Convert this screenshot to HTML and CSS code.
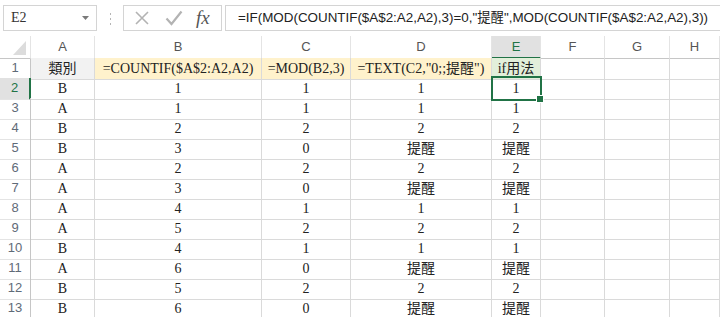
FILE: index.html
```html
<!DOCTYPE html>
<html lang="zh-TW">

<head>
    <meta charset="UTF-8">
    <title>if用法</title>
    <link rel="stylesheet" href="styles.css">
</head>

<body>
    <!-- 名稱方塊 + 公式列 -->
    <div class="formula-bar">
        <div class="name-box">
            <span>E2</span>
            <svg class="caret" width="7" height="4" viewBox="0 0 7 4"><path d="M0 0H7L3.5 4Z" fill="#7a7a7a"/></svg>
        </div>
        <div class="grip">
            <svg width="3" height="13" viewBox="0 0 3 13"><rect x="1" y="1" width="1" height="2" fill="#b5b5b5"/><rect x="1" y="6" width="1" height="2" fill="#b5b5b5"/><rect x="1" y="11" width="1" height="2" fill="#b5b5b5"/></svg>
        </div>
        <div class="fx-box">
            <svg class="ico" width="16" height="16" viewBox="0 0 16 16"><path d="M2 2L14 14M14 2L2 14" stroke="#b3b3b3" stroke-width="1.6" fill="none"/></svg>
            <svg class="ico" width="18" height="16" viewBox="0 0 18 16"><path d="M1.5 8.5L6.5 14L16.5 1.5" stroke="#b3b3b3" stroke-width="2.2" fill="none"/></svg>
            <span class="fx">fx</span>
        </div>
        <div class="formula-input">=IF(MOD(COUNTIF($A$2:A2,A2),3)=0,"提醒",MOD(COUNTIF($A$2:A2,A2),3))</div>
    </div>

    <div class="sheet">
        <div class="row head">
            <div class="corner"><span class="tri"></span></div>
            <div>A</div><div>B</div><div>C</div><div>D</div><div class="on">E</div><div>F</div><div>G</div><div>H</div>
        </div>
        <div class="row">
            <div class="num">1</div>
            <div class="c grey">類別</div>
            <div class="c peach">=COUNTIF($A$2:A2,A2)</div>
            <div class="c peach">=MOD(B2,3)</div>
            <div class="c peach">=TEXT(C2,"0;;提醒")</div>
            <div class="c green">if用法</div>
            <div class="c"></div><div class="c"></div><div class="c"></div>
        </div>
        <div class="row">
            <div class="num on">2</div>
            <div class="c">B</div><div class="c">1</div><div class="c">1</div><div class="c">1</div><div class="c active">1</div>
            <div class="c"></div><div class="c"></div><div class="c"></div>
        </div>
        <div class="row">
            <div class="num">3</div>
            <div class="c">A</div><div class="c">1</div><div class="c">1</div><div class="c">1</div><div class="c">1</div>
            <div class="c"></div><div class="c"></div><div class="c"></div>
        </div>
        <div class="row">
            <div class="num">4</div>
            <div class="c">B</div><div class="c">2</div><div class="c">2</div><div class="c">2</div><div class="c">2</div>
            <div class="c"></div><div class="c"></div><div class="c"></div>
        </div>
        <div class="row">
            <div class="num">5</div>
            <div class="c">B</div><div class="c">3</div><div class="c">0</div><div class="c">提醒</div><div class="c">提醒</div>
            <div class="c"></div><div class="c"></div><div class="c"></div>
        </div>
        <div class="row">
            <div class="num">6</div>
            <div class="c">A</div><div class="c">2</div><div class="c">2</div><div class="c">2</div><div class="c">2</div>
            <div class="c"></div><div class="c"></div><div class="c"></div>
        </div>
        <div class="row">
            <div class="num">7</div>
            <div class="c">A</div><div class="c">3</div><div class="c">0</div><div class="c">提醒</div><div class="c">提醒</div>
            <div class="c"></div><div class="c"></div><div class="c"></div>
        </div>
        <div class="row">
            <div class="num">8</div>
            <div class="c">A</div><div class="c">4</div><div class="c">1</div><div class="c">1</div><div class="c">1</div>
            <div class="c"></div><div class="c"></div><div class="c"></div>
        </div>
        <div class="row">
            <div class="num">9</div>
            <div class="c">A</div><div class="c">5</div><div class="c">2</div><div class="c">2</div><div class="c">2</div>
            <div class="c"></div><div class="c"></div><div class="c"></div>
        </div>
        <div class="row">
            <div class="num">10</div>
            <div class="c">B</div><div class="c">4</div><div class="c">1</div><div class="c">1</div><div class="c">1</div>
            <div class="c"></div><div class="c"></div><div class="c"></div>
        </div>
        <div class="row">
            <div class="num">11</div>
            <div class="c">A</div><div class="c">6</div><div class="c">0</div><div class="c">提醒</div><div class="c">提醒</div>
            <div class="c"></div><div class="c"></div><div class="c"></div>
        </div>
        <div class="row">
            <div class="num">12</div>
            <div class="c">B</div><div class="c">5</div><div class="c">2</div><div class="c">2</div><div class="c">2</div>
            <div class="c"></div><div class="c"></div><div class="c"></div>
        </div>
        <div class="row">
            <div class="num">13</div>
            <div class="c">B</div><div class="c">6</div><div class="c">0</div><div class="c">提醒</div><div class="c">提醒</div>
            <div class="c"></div><div class="c"></div><div class="c"></div>
        </div>
    </div>
</body>

</html>
```

FILE: styles.css
```css
* {
    margin: 0;
    padding: 0;
    box-sizing: border-box;
}

body {
    width: 720px;
    height: 317px;
    overflow: hidden;
    background-color: #fff;
    font-family: "Liberation Sans", "Noto Sans CJK TC", sans-serif;
}

/* 公式列 */
.formula-bar {
    display: flex;
    height: 36px;
    padding: 5px 0 0 3px;
}

.name-box {
    display: flex;
    align-items: center;
    justify-content: space-between;
    width: 94px;
    height: 26px;
    padding: 0 7px 0 7px;
    border: 1px solid #d4d4d4;
    font: 14px "Liberation Serif", "Noto Sans CJK TC", serif;
    color: #333;
}

.grip {
    display: flex;
    align-items: center;
    justify-content: center;
    width: 26px;
    height: 26px;
}

.fx-box {
    display: flex;
    align-items: center;
    width: 99px;
    height: 26px;
    padding-left: 10px;
    border: 1px solid #d4d4d4;
}

.fx-box .ico {
    margin-right: 15px;
}

.fx {
    margin-left: -2px;
    font: italic 19px "Liberation Serif", serif;
    color: #555;
}

.formula-input {
    flex: 1;
    height: 26px;
    margin-left: 3px;
    padding-left: 12px;
    border: 1px solid #d4d4d4;
    border-right: none;
    font-size: 13.4px;
    line-height: 24px;
    color: #222;
    white-space: nowrap;
    overflow: hidden;
}

/* 工作表 */
.row {
    display: grid;
    grid-template-columns: 31px 64px 167px 89px 141px 49px 64px 65px 50px;
    height: 20px;
}

.row > div {
    border-right: 1px solid #dadada;
    border-bottom: 1px solid #dadada;
}

.head {
    height: 22px;
}

.head > div {
    font-size: 13px;
    line-height: 21px;
    text-align: center;
    color: #555;
    border-right-color: #e4e4e4;
    border-bottom-color: #c6c6c6;
}

.head > div.on {
    background-color: #e1e1e1;
    color: #217346;
    border-bottom: 2px solid #217346;
}

.corner {
    position: relative;
}

.corner .tri {
    position: absolute;
    right: 4px;
    bottom: 3px;
    border-style: solid;
    border-width: 0 0 14px 13px;
    border-color: transparent transparent #dcdcdc transparent;
}

.row > .num {
    font-size: 13px;
    line-height: 20px;
    text-align: center;
    color: #5f6b78;
    border-right-color: #c6c6c6;
    border-bottom-color: #e4e4e4;
}

.row > .num.on {
    background-color: #e1e1e1;
    color: #217346;
    border-right: 2px solid #217346;
}

.c {
    font: 14px "Liberation Serif", "Noto Sans CJK TC", serif;
    line-height: 21px;
    text-align: center;
    color: #222;
    white-space: nowrap;
}

.grey {
    background-color: #f2f2f2;
}

.peach {
    background-color: #fff2cc;
}

.green {
    background-color: #e2efda;
}

/* 目前選取的儲存格 */
.active {
    position: relative;
}

.active::after {
    content: "";
    position: absolute;
    top: -2px;
    left: -1px;
    right: -2px;
    bottom: -2px;
    border: 2px solid #217346;
}

.active::before {
    content: "";
    position: absolute;
    right: -4px;
    bottom: -4px;
    width: 6px;
    height: 6px;
    background-color: #217346;
    border: 1px solid #fff;
    z-index: 1;
}
```
